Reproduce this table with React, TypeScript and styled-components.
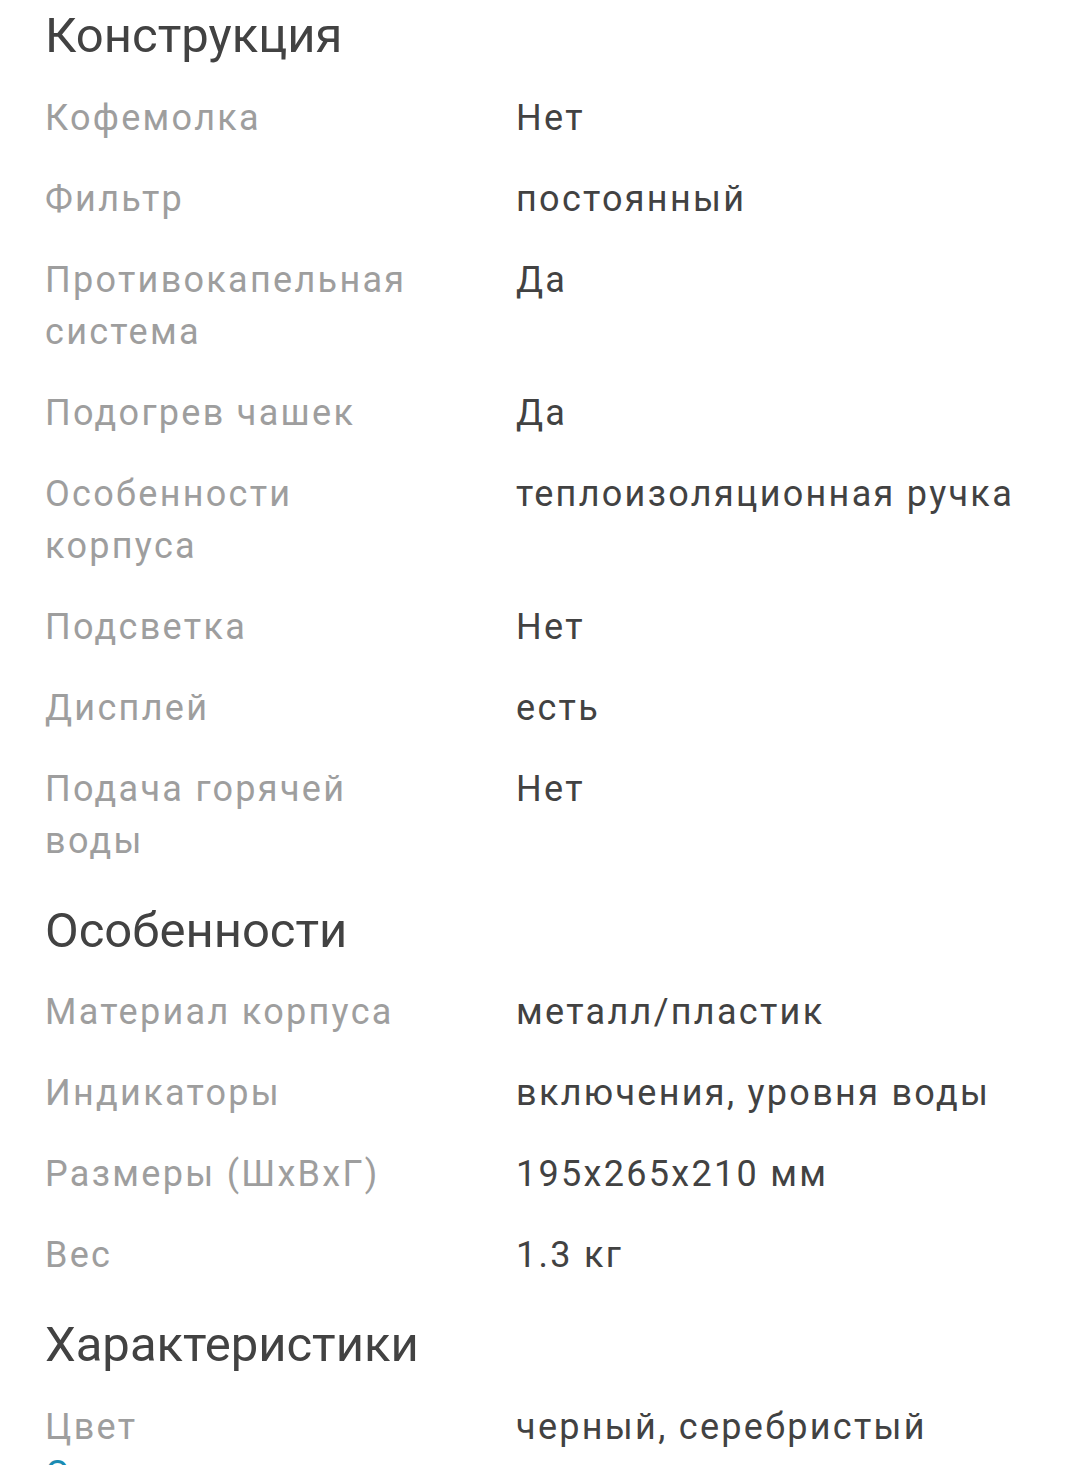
import styled, { createGlobalStyle } from 'styled-components'

const GlobalStyle = createGlobalStyle`
  html, body {
    margin: 0;
    padding: 0;
    background: #ffffff;
  }
  body {
    font-family: Roboto, 'Noto Sans', 'Liberation Sans', sans-serif;
    -webkit-font-smoothing: antialiased;
    overflow: hidden;
  }
`

const Page = styled.div`
  width: 1080px;
  height: 1465px;
  overflow: hidden;
  box-sizing: border-box;
  padding: 6px 45px 0 45px;
  display: flex;
  flex-direction: column;
  gap: 19.5px;
`

const Section = styled.section`
  display: flex;
  flex-direction: column;
`

const Heading = styled.h2`
  margin: 0 0 11px 0;
  font-size: 49px;
  line-height: 60px;
  font-weight: 400;
  color: #424242;
`

const Row = styled.div`
  display: grid;
  grid-template-columns: 471px 1fr;
  padding: 14.5px 0;
  font-size: 36px;
  line-height: 52px;
  letter-spacing: 2.3px;
`

const Label = styled.div`
  color: #9e9e9e;
  padding-right: 75px;
`

const Value = styled.div`
  color: #424242;
`

// teal link that starts right under the last row, only its top shows
const MoreLink = styled.a`
  display: block;
  margin-top: -19px;
  font-size: 36px;
  line-height: 52px;
  letter-spacing: 2.3px;
  color: #1a8cb3;
  text-decoration: none;
`

type Spec = { label: string; value: string }

const sections: { title: string; specs: Spec[] }[] = [
  {
    title: 'Конструкция',
    specs: [
      { label: 'Кофемолка', value: 'Нет' },
      { label: 'Фильтр', value: 'постоянный' },
      { label: 'Противокапельная система', value: 'Да' },
      { label: 'Подогрев чашек', value: 'Да' },
      { label: 'Особенности корпуса', value: 'теплоизоляционная ручка' },
      { label: 'Подсветка', value: 'Нет' },
      { label: 'Дисплей', value: 'есть' },
      { label: 'Подача горячей воды', value: 'Нет' },
    ],
  },
  {
    title: 'Особенности',
    specs: [
      { label: 'Материал корпуса', value: 'металл/пластик' },
      { label: 'Индикаторы', value: 'включения, уровня воды' },
      { label: 'Размеры (ШхВхГ)', value: '195x265x210 мм' },
      { label: 'Вес', value: '1.3 кг' },
    ],
  },
  {
    title: 'Характеристики',
    specs: [{ label: 'Цвет', value: 'черный, серебристый' }],
  },
]

export default function App() {
  return (
    <>
      <GlobalStyle />
      <Page>
        {sections.map((section, i) => (
          <Section key={section.title}>
            <Heading>{section.title}</Heading>
            {section.specs.map((spec) => (
              <Row key={spec.label}>
                <Label>{spec.label}</Label>
                <Value>{spec.value}</Value>
              </Row>
            ))}
            {i === sections.length - 1 && <MoreLink href="#">Описание</MoreLink>}
          </Section>
        ))}
      </Page>
    </>
  )
}
